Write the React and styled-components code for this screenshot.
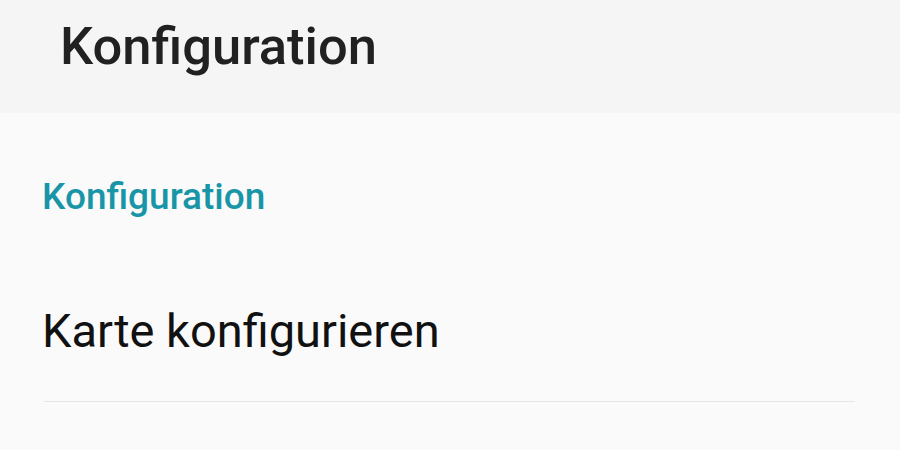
import React from 'react';
import styled, { createGlobalStyle } from 'styled-components';

const GlobalStyle = createGlobalStyle`
  html, body {
    margin: 0;
    padding: 0;
    background: #fafafa;
    font-family: Roboto, "Noto Sans", sans-serif;
  }
`;

const Page = styled.div`
  width: 900px;
  height: 450px;
  overflow: hidden;
  background: #fafafa;
`;

const AppBar = styled.header`
  height: 113px;
  background: #f5f5f5;
  display: flex;
  align-items: flex-start;
  padding: 20px 0 0 60px;
  box-sizing: border-box;
`;

const AppTitle = styled.h1`
  margin: 0;
  font-size: 52.5px;
  line-height: 1;
  font-weight: 500;
  color: #212121;
`;

const Content = styled.main`
  padding: 0 45px 0 42px;
`;

const CategoryTitle = styled.h2`
  margin: 0;
  padding-top: 64px;
  font-size: 37px;
  font-weight: 500;
  line-height: 40px;
  color: #1995a8;
`;

const PreferenceRow = styled.div`
  padding: 90px 0 47px;
  border-bottom: 1px solid #e6e6e6;
  margin-left: 2px;
`;

const PreferenceLabel = styled.span`
  display: block;
  font-size: 47px;
  line-height: 47px;
  color: #111;
  margin-left: -2px;
`;

export default function App() {
  return (
    <Page>
      <GlobalStyle />
      <AppBar>
        <AppTitle>Konfiguration</AppTitle>
      </AppBar>
      <Content>
        <CategoryTitle>Konfiguration</CategoryTitle>
        <PreferenceRow>
          <PreferenceLabel>Karte konfigurieren</PreferenceLabel>
        </PreferenceRow>
      </Content>
    </Page>
  );
}
